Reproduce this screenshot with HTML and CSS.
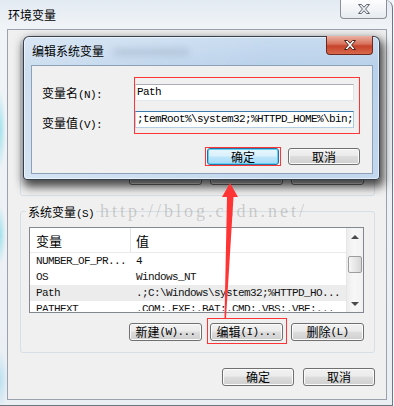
FILE: index.html
```html
<!DOCTYPE html>
<html>

<head>
  <meta charset="utf8">
  <title>环境变量</title>
  <link rel="stylesheet" href="styles.css">
</head>

<body>
  <div class="window">
    <div class="titlebar">
      <span class="title">环境变量</span>
      <div class="close">
        <svg width="12" height="10" viewBox="0 0 12 10"><path d="M0.5 0.5H3.5L6 3.3L8.5 0.5H11.5L7.6 5L11.5 9.5H8.5L6 6.7L3.5 9.5H0.5L4.4 5Z" fill="#eceef1" stroke="#5f666e" stroke-width="1"/></svg>
      </div>
    </div>

    <div class="client">
      <!-- user variables, mostly hidden under the edit dialog -->
      <div class="group group-user">
        <div class="btn-row">
          <div class="btn"></div>
          <div class="btn"></div>
          <div class="btn"></div>
        </div>
      </div>

      <div class="group group-sys">
        <div class="group-label">系统变量<span class="acc">(S)</span></div>
        <div class="listview">
          <div class="lv-main">
            <div class="lv-head">
              <div class="c1">变量</div>
              <div class="c2">值</div>
            </div>
            <div class="lv-body">
              <div class="lv-row"><div class="c1">NUMBER_OF_PR...</div><div class="c2">4</div></div>
              <div class="lv-row"><div class="c1">OS</div><div class="c2">Windows_NT</div></div>
              <div class="lv-row sel"><div class="c1">Path</div><div class="c2">.;C:\Windows\system32;%HTTPD_HO...</div></div>
              <div class="lv-row"><div class="c1">PATHEXT</div><div class="c2">.COM;.EXE;.BAT;.CMD;.VBS;.VBE;...</div></div>
            </div>
          </div>
          <div class="lv-scroll">
            <div class="sb-btn"><span class="tri-up"></span></div>
            <div class="sb-thumb"></div>
            <div class="sb-btn sb-down"><span class="tri-down"></span></div>
          </div>
        </div>
        <div class="btn-row">
          <div class="btn">新建<span class="acc">(W)...</span></div>
          <div class="btn marked">编辑<span class="acc">(I)...</span></div>
          <div class="btn">删除<span class="acc">(L)</span></div>
        </div>
      </div>

      <div class="client-buttons">
        <div class="btn">确定</div>
        <div class="btn">取消</div>
      </div>
    </div>

    <div class="dialog">
      <div class="dlg-title">
        <span class="title">编辑系统变量</span>
        <div class="glass-blur"></div>
        <div class="dlg-close">
          <svg width="12" height="10" viewBox="0 0 12 10"><path d="M0.5 0.5H3.5L6 3.3L8.5 0.5H11.5L7.6 5L11.5 9.5H8.5L6 6.7L3.5 9.5H0.5L4.4 5Z" fill="#fff" stroke="#4a2119" stroke-width="1"/></svg>
        </div>
      </div>
      <div class="dlg-body">
        <div class="form">
          <div class="labels">
            <div class="label">变量名<span class="acc">(N):</span></div>
            <div class="label">变量值<span class="acc">(V):</span></div>
          </div>
          <div class="fieldbox">
            <div class="textbox">Path</div>
            <div class="textbox focused">;temRoot%\system32;%HTTPD_HOME%\bin;</div>
          </div>
        </div>
        <div class="dlg-actions">
          <div class="btn default marked-tight">确定</div>
          <div class="btn">取消</div>
        </div>
      </div>
    </div>

    <div class="watermark">http://blog.csdn.net/</div>

    <svg class="arrow" width="394" height="406" viewBox="0 0 394 406">
      <polygon points="230,183 238,197 233.5,197 226,318 224.5,318 227,197 222,197" fill="#ff3434"/>
    </svg>
  </div>
</body>

</html>
```

FILE: styles.css
```css
body {
  margin: 0;
  font: 12px "Noto Sans CJK SC", sans-serif;
  color: #000;
  background: #f3f6f9;
}

.acc {
  font-family: "Liberation Mono", monospace;
  font-size: 11px;
  letter-spacing: -0.6px;
}

.window {
  position: relative;
  box-sizing: border-box;
  width: 393px;
  height: 406px;
  padding: 0 5px 5px 7px;
  border-right: 1px solid #6f7780;
  border-bottom: 1px solid #6f7780;
  border-top-right-radius: 8px;
  display: flex;
  flex-direction: column;
  background:
    radial-gradient(ellipse 6px 40px at 0 130px, rgba(110, 215, 230, 0.6), transparent),
    radial-gradient(ellipse 6px 30px at 0 235px, rgba(110, 215, 230, 0.6), transparent),
    radial-gradient(ellipse 8px 30px at 0 380px, rgba(140, 210, 235, 0.5), transparent),
    linear-gradient(#e2eaf2, #f1f4f7 28px, #eaeff4);
}

.titlebar {
  height: 29px;
  display: flex;
  align-items: center;
  padding-left: 1px;
}

.title {
  line-height: 14px;
}

.close {
  margin-left: auto;
  align-self: flex-start;
  box-sizing: border-box;
  width: 47px;
  height: 19px;
  border: 1px solid #8b9096;
  border-top: none;
  border-radius: 0 0 4px 4px;
  background: linear-gradient(#fdfdfe, #e7ebef);
  display: flex;
  align-items: center;
  justify-content: center;
}

.client {
  box-sizing: border-box;
  height: 371px;
  border: 1px solid #9aa3ad;
  background: #f0f0f0;
  display: flex;
  flex-direction: column;
}

.group {
  box-sizing: border-box;
  margin: 0 11px 0 12px;
  border: 1px solid #d5dfe5;
  border-radius: 3px;
  display: flex;
  flex-direction: column;
}

.group-user {
  margin-top: 10px;
  height: 156px;
  justify-content: flex-end;
  padding: 0 10px 10px 8px;
}

.group-sys {
  margin-top: 15px;
  height: 142px;
  padding: 0 10px 11px 8px;
}

.group-label {
  align-self: flex-start;
  margin: -7px 0 0 -3px;
  padding: 0 2px;
  line-height: 13px;
  background: #f0f0f0;
}

.listview {
  margin-top: 6px;
  height: 89px;
  box-sizing: border-box;
  border: 1px solid #828790;
  background: #fff;
  display: grid;
  grid-template-columns: 1fr 17px;
}

.lv-main {
  overflow: hidden;
}

.lv-head {
  display: flex;
  align-items: center;
  height: 25px;
  box-sizing: border-box;
  border-bottom: 1px solid #eaeaea;
  font-size: 13px;
}

.lv-head .c1 {
  align-self: stretch;
  display: flex;
  align-items: center;
  border-right: 1px solid #e3e3e3;
}

.c1 {
  width: 101px;
  box-sizing: border-box;
  padding-left: 6px;
  flex: none;
}

.c2 {
  padding-left: 5px;
  white-space: nowrap;
}

.lv-body {
  height: 58px;
  overflow: hidden;
}

.lv-row {
  display: flex;
  align-items: center;
  height: 16px;
  font: 11px "Liberation Mono", monospace;
  letter-spacing: -0.6px;
  white-space: nowrap;
  color: #111;
}

.lv-row.sel {
  background: #ececec;
}

.lv-scroll {
  border-left: 1px solid #e6e6e6;
  background: linear-gradient(to right, #ececec, #f7f7f7 40%, #f2f2f2);
  display: flex;
  flex-direction: column;
}

.sb-btn {
  height: 17px;
  display: flex;
  align-items: center;
  justify-content: center;
}

.sb-down {
  margin-top: auto;
}

.tri-up,
.tri-down {
  width: 0;
  height: 0;
  border-left: 4px solid transparent;
  border-right: 4px solid transparent;
}

.tri-up {
  border-bottom: 4px solid #4a4a4a;
}

.tri-down {
  border-top: 4px solid #4a4a4a;
}

.sb-thumb {
  margin: 11px 1px 0;
  height: 17px;
  box-sizing: border-box;
  border: 1px solid #9d9d9d;
  border-radius: 2px;
  background: linear-gradient(to right, #f6f6f6, #e4e4e4 60%, #d6d6d6);
}

.btn-row {
  display: flex;
  justify-content: flex-end;
  gap: 8px;
}

.group-sys .btn-row {
  margin-top: 10px;
}

.btn {
  position: relative;
  box-sizing: border-box;
  width: 73px;
  height: 18px;
  border: 1px solid #707070;
  border-radius: 3px;
  background: linear-gradient(#f2f2f2 0%, #ebebeb 45%, #dddddd 50%, #cfcfcf 100%);
  box-shadow: inset 0 0 0 1px #fbfbfb;
  display: flex;
  align-items: center;
  justify-content: center;
  line-height: 14px;
}

/* red annotation frames drawn over the screenshot */
.marked::after,
.marked-tight::after {
  content: "";
  position: absolute;
  border: 1px solid #ff3434;
}

.marked::after {
  left: -4px;
  right: -5px;
  top: -6px;
  bottom: -4px;
}

.marked-tight::after {
  left: -3px;
  right: -3px;
  top: -2px;
  bottom: -2px;
}

.client-buttons {
  display: flex;
  justify-content: flex-end;
  gap: 9px;
  margin: 15px 11px 0 0;
}

.client-buttons .btn {
  width: 72px;
}

.dialog {
  position: absolute;
  left: 23px;
  top: 36px;
  box-sizing: border-box;
  width: 357px;
  height: 144px;
  padding: 0 6px 5px 7px;
  border: 1px solid rgba(28, 38, 50, 0.85);
  border-radius: 6px 6px 4px 4px;
  background:
    linear-gradient(to right, rgba(255, 255, 255, 0.3), rgba(255, 255, 255, 0) 70%),
    linear-gradient(#c9dcf0, #b9d1ea 30px, #c3d8ee);
  box-shadow: inset 0 0 0 1px rgba(255, 255, 255, 0.55), 2px 5px 10px 2px rgba(0, 0, 0, 0.7);
}

.dlg-title {
  height: 28px;
  display: flex;
  align-items: center;
  padding-left: 1px;
}

.glass-blur {
  width: 76px;
  height: 8px;
  margin: 2px 0 0 9px;
  border-radius: 4px;
  background: rgba(70, 85, 110, 0.14);
  filter: blur(3px);
}

.dlg-close {
  margin-left: auto;
  align-self: flex-start;
  margin-top: -1px;
  box-sizing: border-box;
  width: 47px;
  height: 19px;
  border: 1px solid #6b2a1f;
  border-top: none;
  border-radius: 0 0 4px 4px;
  background: linear-gradient(#eab2a3, #d8705a 45%, #c6432a 55%, #d9684c);
  display: flex;
  align-items: center;
  justify-content: center;
}

.dlg-body {
  box-sizing: border-box;
  height: 109px;
  border: 1px solid #8ca0b8;
  background: #f0f0f0;
  padding: 11px 12px 13px 0;
  display: flex;
  flex-direction: column;
}

.form {
  display: flex;
}

.labels {
  width: 111px;
  box-sizing: border-box;
  padding: 7px 0 0 10px;
  display: flex;
  flex-direction: column;
  gap: 10px;
}

.label {
  line-height: 17px;
}

.fieldbox {
  width: 226px;
  box-sizing: border-box;
  border: 1px solid #ff3434;
  padding: 6px 5px 0 0;
  display: flex;
  flex-direction: column;
  gap: 10px;
}

.textbox {
  height: 17px;
  box-sizing: border-box;
  border: 1px solid;
  border-color: #abadb3 #e2e3ea #e3e9ef #dbdfe6;
  background: #fff;
  padding-left: 1px;
  font: 11px "Liberation Mono", monospace;
  letter-spacing: -0.6px;
  line-height: 15px;
  white-space: nowrap;
  overflow: hidden;
}

.textbox.focused {
  border-color: #3d7bad #a4c9e3 #b5cfe7 #b5cfe7;
}

.dlg-actions {
  display: flex;
  justify-content: flex-end;
  gap: 9px;
  margin-top: 14px;
}

.dlg-actions .btn {
  width: 72px;
  height: 17px;
}

.btn.default {
  border-color: #2f6f9f;
  background: linear-gradient(#eaf6fd 0%, #d9f0fc 48%, #bee6fd 52%, #a7d9f5 100%);
  box-shadow: inset 0 0 0 1px #5fd2f7;
}

.watermark {
  position: absolute;
  left: 100px;
  top: 201px;
  font: 18px "Liberation Serif", serif;
  letter-spacing: 3px;
  color: rgba(110, 110, 110, 0.3);
  pointer-events: none;
}

.arrow {
  position: absolute;
  left: 0;
  top: 0;
  pointer-events: none;
}
```
